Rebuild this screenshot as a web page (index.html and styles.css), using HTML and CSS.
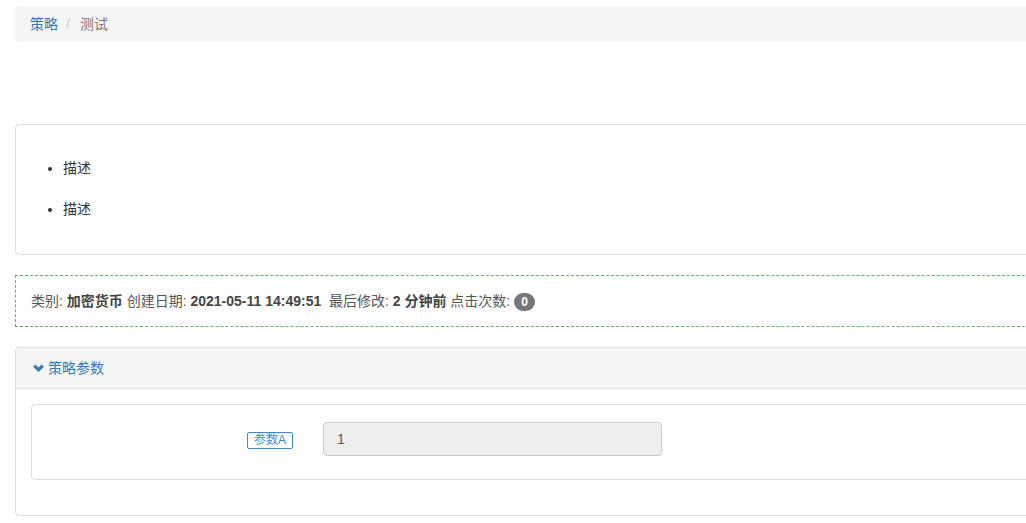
FILE: index.html
```html
<!DOCTYPE html>
<html lang="zh">
<head>
    <meta charset="UTF-8">
    <meta name="viewport" content="width=device-width, initial-scale=1.0">
    <title>策略 - 测试</title>
    <link rel="stylesheet" href="styles.css">
</head>
<body>
<div class="page">
    <ol class="breadcrumb">
        <li><a href="#">策略</a></li>
        <li class="active">测试</li>
    </ol>

    <div class="panel desc-panel">
        <div class="panel-body">
            <ul class="desc-list">
                <li>描述</li>
                <li>描述</li>
            </ul>
        </div>
    </div>

    <div class="info-box">
        类别: <b>加密货币</b> 创建日期: <b>2021-05-11 14:49:51</b>&nbsp; 最后修改: <b>2 分钟前</b> 点击次数: <span class="badge">0</span>
    </div>

    <div class="panel">
        <div class="panel-heading">
            <svg class="chevron" width="11" height="9" viewBox="0 0 11 9">
                <polyline points="1.3,1.6 5.5,5.8 9.7,1.6" fill="none" stroke="#337ab7" stroke-width="3.2"/>
            </svg>
            <span>策略参数</span>
        </div>
        <div class="panel-body">
            <div class="param-box">
                <div class="form-group">
                    <div class="param-label"><span class="param-tag">参数A</span></div>
                    <div class="param-field">
                        <input type="text" value="1" disabled>
                    </div>
                </div>
            </div>
        </div>
    </div>
</div>
</body>
</html>
```

FILE: styles.css
```css
html, body {
    margin: 0;
    overflow: hidden;
}
body {
    font-family: "Liberation Sans", "Noto Sans CJK SC", sans-serif;
    font-size: 14px;
    line-height: 20px;
    color: #333;
    background: #fff;
}
.page {
    width: 1100px;
    padding: 6px 15px;
}
.breadcrumb {
    list-style: none;
    margin: 0;
    padding: 8px 15px;
    background-color: #f5f5f5;
    border-radius: 4px;
    display: flex;
}
.breadcrumb li + li:before {
    content: "/";
    color: #ccc;
    padding: 0 10px 0 8px;
}
.breadcrumb a {
    color: #337ab7;
    text-decoration: none;
}
.breadcrumb .active {
    color: #777;
}
.panel {
    border: 1px solid #ddd;
    border-radius: 4px;
    margin-bottom: 20px;
}
.desc-panel {
    margin-top: 82px;
}
.panel-body {
    padding: 15px;
}
.desc-list {
    margin: 0;
    padding: 8px 0 10px 32px;
}
.desc-list li {
    padding: 10px 0;
}
.desc-list li + li {
    margin-top: 1px;
}
.info-box {
    border: 1px dashed #5cb85c;
    padding: 15px;
    font-size: 14px;
    color: #555;
    margin-bottom: 20px;
}
.info-box b {
    color: #444;
}
.badge {
    display: inline-block;
    min-width: 6px;
    padding: 1px 7px;
    font-size: 12px;
    font-weight: bold;
    line-height: 16px;
    color: #fff;
    background-color: #777;
    border-radius: 10px;
    text-align: center;
    vertical-align: middle;
}
.panel-heading {
    background-color: #f5f5f5;
    border-bottom: 1px solid #ddd;
    padding: 10px 17px;
    color: #337ab7;
    display: flex;
    align-items: center;
    border-radius: 4px 4px 0 0;
}
.chevron {
    margin-right: 4px;
}
.param-box {
    border: 1px solid #ddd;
    border-radius: 4px;
    padding: 17px 0 9px;
    margin-bottom: 20px;
}
.form-group {
    display: flex;
    align-items: center;
    margin-bottom: 14px;
}
.param-label {
    width: 261px;
    padding-right: 15px;
    text-align: right;
}
.param-tag {
    display: inline-block;
    border: 1px solid #3f88d0;
    border-radius: 2px;
    color: #3f88d0;
    font-size: 12px;
    line-height: 15px;
    padding: 0 6px;
}
.param-field {
    padding-left: 15px;
}
.param-field input {
    width: 339px;
    height: 34px;
    box-sizing: border-box;
    padding: 6px 13px;
    font-family: inherit;
    font-size: 14px;
    color: #555;
    background-color: #eee;
    border: 1px solid #ccc;
    border-radius: 4px;
    opacity: 1;
}
```
